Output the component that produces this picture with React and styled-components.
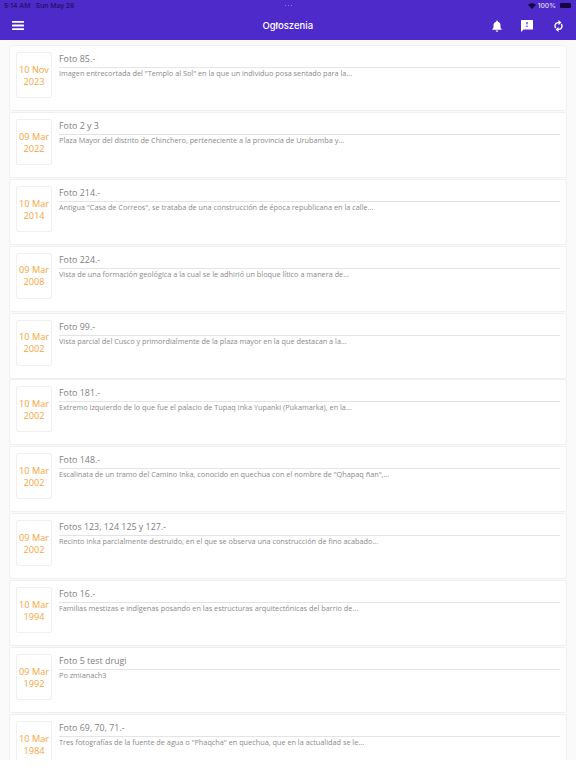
import React from 'react';
import styled, { createGlobalStyle } from 'styled-components';

const GlobalStyle = createGlobalStyle`
  html, body {
    margin: 0;
    padding: 0;
    background: #ffffff;
  }
  body {
    font-family: "Open Sans", "Noto Sans", sans-serif;
  }
`;

const Page = styled.div`
  width: 576px;
  height: 768px;
  overflow: hidden;
  display: flex;
  flex-direction: column;
  background: #ffffff;
`;

const Header = styled.header`
  flex: none;
  height: 40px;
  background: #4d2ac9;
  color: #ffffff;
  display: flex;
  flex-direction: column;
`;

const StatusBar = styled.div`
  height: 11px;
  padding: 0 4px;
  display: grid;
  grid-template-columns: 1fr auto 1fr;
  align-items: center;
  font-family: "Inter", sans-serif;
  font-size: 6.8px;
  font-weight: 500;
  color: #1d1160;
`;

const StatusDots = styled.div`
  display: flex;
  gap: 2px;
`;

const StatusDot = styled.span`
  width: 1px;
  height: 1px;
  background: #8f7ce0;
`;

const StatusRight = styled.div`
  display: flex;
  justify-content: flex-end;
  align-items: center;
  gap: 2px;
  padding-right: 1px;
  color: #ded8f6;
`;

const Battery = styled.div`
  width: 11px;
  height: 5px;
  margin-left: 2px;
  border-radius: 1px;
  background: #14093f;
`;

const NavBar = styled.div`
  flex: 1;
  display: grid;
  grid-template-columns: 1fr auto 1fr;
  align-items: center;
  padding: 0 12.5px 0 12px;
`;

const NavTitle = styled.div`
  font-family: "Inter", sans-serif;
  font-size: 9.5px;
  font-weight: 500;
`;

const NavActions = styled.div`
  display: flex;
  justify-content: flex-end;
  align-items: center;
  gap: 19.5px;
`;

const IconBtn = styled.div`
  display: flex;
  align-items: center;
  justify-content: ${({ $start }) => ($start ? 'flex-start' : 'center')};
  line-height: 0;
`;

const List = styled.div`
  flex: none;
  height: 720px;
  box-sizing: border-box;
  display: flex;
  flex-direction: column;
  gap: 0.9px;
  padding: 5px 9px 0 9px;
  overflow: hidden;
  background: #fafafa;
`;

const Card = styled.article`
  flex: none;
  box-sizing: border-box;
  height: 66px;
  padding: 6px;
  display: flex;
  gap: 7px;
  background: #ffffff;
  border: 1px solid #efefef;
  border-radius: 3px;
`;

const DateBox = styled.div`
  flex: none;
  box-sizing: border-box;
  width: 36px;
  height: 46px;
  padding-top: 1.5px;
  display: flex;
  align-items: center;
  justify-content: center;
  text-align: center;
  font-size: 9.2px;
  line-height: 12px;
  color: #f5a63c;
  background: #ffffff;
  border: 1px solid #f0f0f0;
  border-radius: 2px;
`;

const Body = styled.div`
  flex: 1;
  min-width: 0;
`;

const Title = styled.div`
  height: 16px;
  box-sizing: border-box;
  font-size: 8.9px;
  line-height: 13px;
  color: #808080;
  border-bottom: 1px solid #e4e4e4;
`;

const Desc = styled.div`
  font-size: 7.3px;
  line-height: 10px;
  color: #8a8a8a;
  white-space: nowrap;
`;

const items = [
  ['10 Nov', '2023', 'Foto 85.-', 'Imagen entrecortada del "Templo al Sol" en la que un individuo posa sentado para la...'],
  ['09 Mar', '2022', 'Foto 2 y 3', 'Plaza Mayor del distrito de Chinchero, perteneciente a la provincia de Urubamba y...'],
  ['10 Mar', '2014', 'Foto 214.-', 'Antigua "Casa de Correos", se trataba de una construcción de época republicana en la calle...'],
  ['09 Mar', '2008', 'Foto 224.-', 'Vista de una formación geológica a la cual se le adhirió un bloque lítico a manera de...'],
  ['10 Mar', '2002', 'Foto 99.-', 'Vista parcial del Cusco y primordialmente de la plaza mayor en la que destacan a la...'],
  ['10 Mar', '2002', 'Foto 181.-', 'Extremo izquierdo de lo que fue el palacio de Tupaq Inka Yupanki (Pukamarka), en la...'],
  ['10 Mar', '2002', 'Foto 148.-', 'Escalinata de un tramo del Camino Inka, conocido en quechua con el nombre de "Qhapaq ñan",...'],
  ['09 Mar', '2002', 'Fotos 123, 124 125 y 127.-', 'Recinto Inka parcialmente destruido, en el que se observa una construcción de fino acabado...'],
  ['10 Mar', '1994', 'Foto 16.-', 'Familias mestizas e indígenas posando en las estructuras arquitectónicas del barrio de...'],
  ['09 Mar', '1992', 'Foto 5 test drugi', 'Po zmianach3'],
  ['10 Mar', '1984', 'Foto 69, 70, 71.-', 'Tres fotografías de la fuente de agua o "Phaqcha" en quechua, que en la actualidad se le...'],
];

const MenuIcon = () => (
  <svg width="12" height="10" viewBox="0 0 12 10" fill="#fff">
    <rect x="0" y="0" width="12" height="1.8" rx="0.5" />
    <rect x="0" y="3.6" width="12" height="1.8" rx="0.5" />
    <rect x="0" y="7.2" width="12" height="1.8" rx="0.5" />
  </svg>
);

const BellIcon = () => (
  <svg width="10" height="12" viewBox="0 0 10 12" fill="#fff">
    <path d="M5 0.4c.5 0 .8.4.8.9v.4c1.7.4 2.7 1.8 2.7 3.5v2.4L9.7 9.2v.6H.3v-.6l1.2-1.6V5.2c0-1.7 1-3.1 2.7-3.5v-.4c0-.5.3-.9.8-.9z" />
    <path d="M3.7 10.4h2.6C6.2 11.2 5.7 11.7 5 11.7s-1.2-.5-1.3-1.3z" />
  </svg>
);

const FeedbackIcon = () => (
  <svg width="12" height="12" viewBox="0 0 12 12">
    <path fill="#fff" d="M.6 0h10.8c.3 0 .6.3.6.6v8.3c0 .3-.3.6-.6.6H2.6L0 12V.6C0 .3.3 0 .6 0z" />
    <rect x="5.4" y="2" width="1.2" height="2.4" fill="#4d2ac9" />
    <rect x="5.4" y="5.6" width="1.2" height="1.4" fill="#4d2ac9" />
  </svg>
);

const SyncIcon = () => (
  <svg width="11" height="12" viewBox="0 0 11 12" fill="#fff">
    <path d="M5.5 2V0L8.4 2.6 5.5 5.2V3.3A2.8 2.8 0 0 0 2.7 6c0 .6.2 1.1.5 1.6l-1 1A4.2 4.2 0 0 1 1.3 6 4.2 4.2 0 0 1 5.5 2z" />
    <path d="M5.5 10v2L2.6 9.4 5.5 6.8v1.9A2.8 2.8 0 0 0 8.3 6c0-.6-.2-1.1-.5-1.6l1-1c.6.7.9 1.6.9 2.6A4.2 4.2 0 0 1 5.5 10z" />
  </svg>
);

const WifiIcon = () => (
  <svg width="8" height="6" viewBox="0 0 8 6" fill="#14093f">
    <path d="M4 6 0 1.8C2.3-.4 5.7-.4 8 1.8z" />
  </svg>
);

const App = () => (
  <Page>
    <GlobalStyle />
    <Header>
      <StatusBar>
        <span>5:14 AM&nbsp;&nbsp;&nbsp;Sun May 26</span>
        <StatusDots>
          <StatusDot />
          <StatusDot />
          <StatusDot />
        </StatusDots>
        <StatusRight>
          <WifiIcon />
          <span>100%</span>
          <Battery />
        </StatusRight>
      </StatusBar>
      <NavBar>
        <IconBtn $start><MenuIcon /></IconBtn>
        <NavTitle>Ogłoszenia</NavTitle>
        <NavActions>
          <IconBtn><BellIcon /></IconBtn>
          <IconBtn><FeedbackIcon /></IconBtn>
          <IconBtn><SyncIcon /></IconBtn>
        </NavActions>
      </NavBar>
    </Header>
    <List>
      {items.map(([day, year, title, desc], i) => (
        <Card key={i}>
          <DateBox>{day}<br />{year}</DateBox>
          <Body>
            <Title>{title}</Title>
            <Desc>{desc}</Desc>
          </Body>
        </Card>
      ))}
    </List>
  </Page>
);

export default App;
